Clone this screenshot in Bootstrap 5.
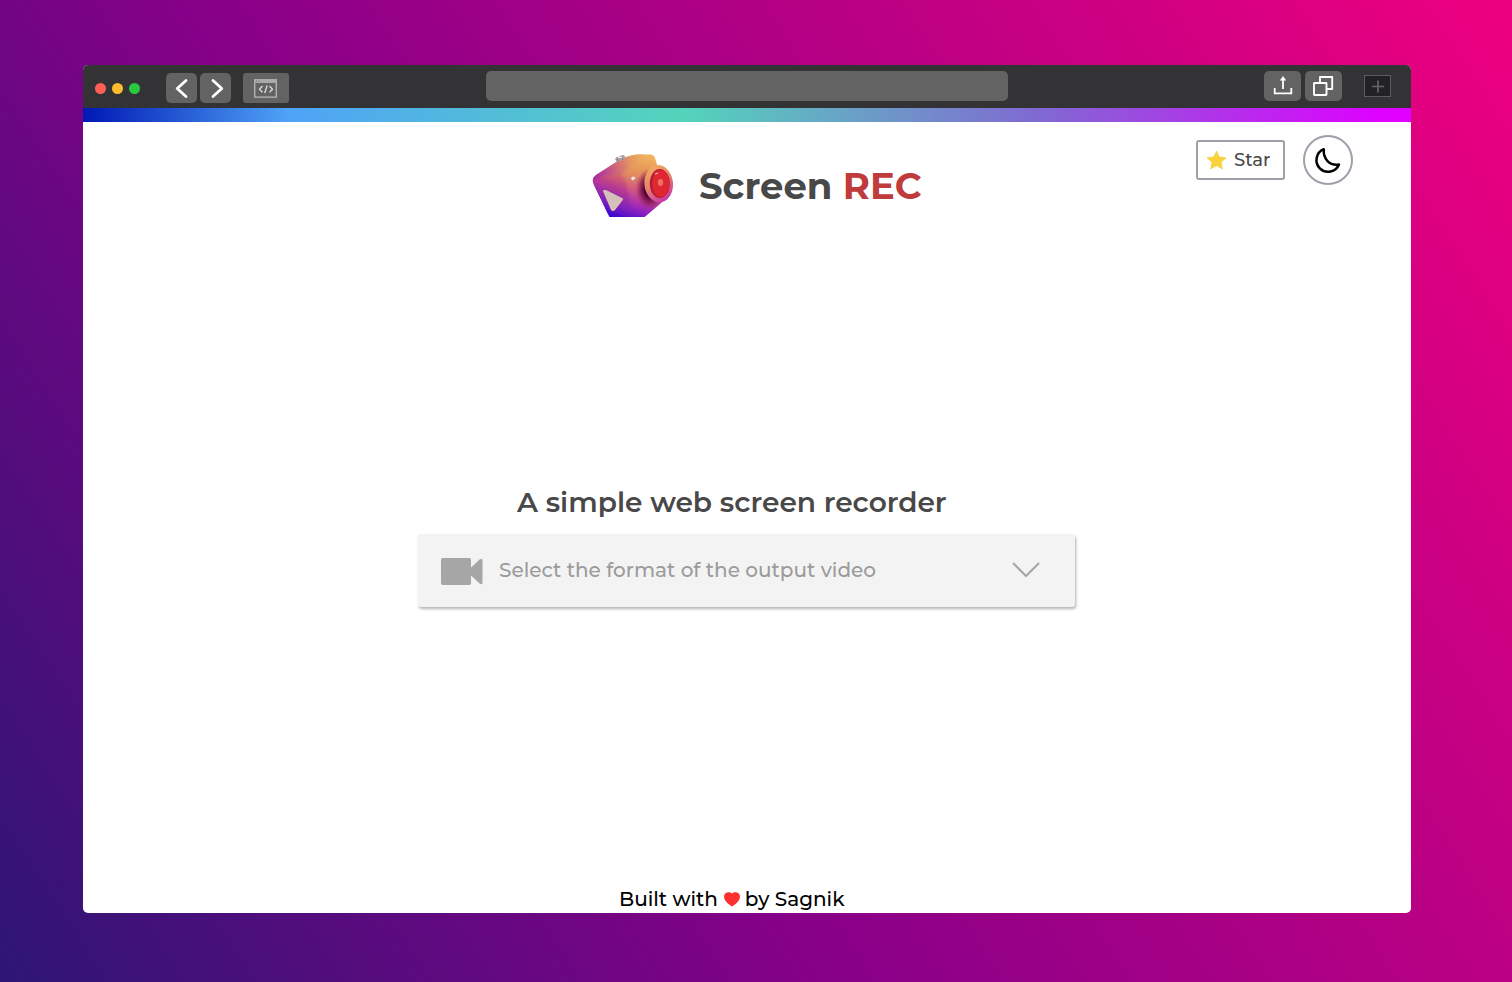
<!DOCTYPE html>
<html lang="en">
<head>
<meta charset="utf-8">
<meta name="viewport" content="width=device-width, initial-scale=1">
<title>Screen REC</title>
<link href="https://cdn.jsdelivr.net/npm/bootstrap@5.3.0/dist/css/bootstrap.min.css" rel="stylesheet">
<style>
body{height:982px;padding:65px 101px 69px 83px;overflow:hidden;font-family:Montserrat,Inter,sans-serif;background:linear-gradient(57deg,#2d1674 0%,#850088 38%,#f1007f 102%)}
svg{display:block;flex:none}
.window{height:848px;border-radius:5px;background:#fff}
.titlebar{height:43px;background:#333335;padding:0 20px 0 12px}
.dot{width:11px;height:11px;border-radius:50%}
.tool{background:#636363;border-radius:5px;height:30px;border:0;padding:0;display:flex;align-items:center;justify-content:center}
.nav-tool{width:31px}.code-tool{width:46px;border-radius:3px}.side-tool{width:37px}
.address{width:522px;height:30px;border-radius:5px;background:#636363;margin-bottom:2px}
.plus{width:27px;height:22px;border:1px solid #5c5c5e;background:#222224;margin-left:22px}
.rainbow{height:14px;background:linear-gradient(90deg,#0018b4 0%,#4fa3f7 15.5%,#54d4bb 45%,#8069d2 72%,#df00ff 98%)}
.brand-row{height:110px;padding-left:506px}
.brand{font-size:37px;font-weight:700;color:#484848;line-height:44px;margin:42px 0 0 22px;white-space:nowrap}
.rec{color:#c03b3b}
.actions{top:13px;right:58px}
.star-btn{width:89px;height:40px;border:2px solid #a19eaa;border-radius:3px;background:#fff;padding:0 0 0 8px;font-size:18px;font-weight:500;color:#484848}
.theme-btn{width:50px;height:50px;border:2px solid #a19eaa;border-radius:50%;background:#fff}
.picker{width:657px;margin:250px 0 0 335px}
.tagline{font-size:28px;font-weight:600;line-height:40px;color:#484848;margin:0 0 12px 99px;white-space:nowrap}
.format{height:73px;background:#f3f3f3;border-radius:3px;box-shadow:1px 2px 3px rgba(0,0,0,.3);padding:0 35px 0 23px;color:#9b9b9b;font-size:20px;font-weight:500;white-space:nowrap}
.credit{font-size:20px;font-weight:500;line-height:28px;color:#000;padding-left:536px;white-space:nowrap}
</style>
</head>
<body>
<div class="window d-flex flex-column overflow-hidden">
  <header class="titlebar d-flex align-items-center flex-shrink-0">
    <div class="d-flex" style="gap:6px;margin:4px 26px 0 0">
      <span class="dot" style="background:#ff5f57"></span><span class="dot" style="background:#ffbd2e"></span><span class="dot" style="background:#28c840"></span>
    </div>
    <div class="d-flex" style="gap:3px;margin-top:3px">
      <button class="tool nav-tool" aria-label="Back"><svg width="31" height="30" fill="none" stroke="#fff" stroke-width="2.8" stroke-linecap="round" stroke-linejoin="round"><path d="M20 7.500 11.200 15.500 20 23.500"/></svg></button>
      <button class="tool nav-tool" aria-label="Forward"><svg width="31" height="30" fill="none" stroke="#fff" stroke-width="2.8" stroke-linecap="round" stroke-linejoin="round"><path d="M13 7.500 21.800 15.500 13 23.500"/></svg></button>
      <button class="tool code-tool" aria-label="Code" style="margin-left:9px"><svg width="46" height="30" fill="none" stroke="#b9b9b9"><path d="M11.700 7v17.200h21.600V7" stroke-width="1.3"/><path d="M11 6h23v4H11z" fill="#aaa" stroke="none"/><path d="M13 8h1m1.500 0h1" stroke="#666"/><path d="m19.500 13-3 3.200 3 3.200M26.500 13l3 3.200-3 3.200M24.200 12.500l-2.500 7.500" stroke="#dedede" stroke-width="1.3"/></svg></button>
    </div>
    <div class="address" style="margin-left:197px"></div>
    <div class="d-flex align-items-center ms-auto" style="margin-bottom:2px">
      <button class="tool side-tool" aria-label="Share"><svg width="37" height="30" fill="none" stroke="#fff" stroke-width="1.8"><path d="M10.700 17v5.300h16.600V17M19 18V7"/><path d="M15.800 9.500 19 5l3.200 4.500z" fill="#fff" stroke="none"/></svg></button>
      <button class="tool side-tool ms-1" aria-label="Tabs"><svg width="37" height="30" fill="none" stroke="#fff" stroke-width="1.900" stroke-linejoin="round"><rect x="9" y="12" width="12.500" height="12" rx=".5"/><path d="M15 11.500V6h12.200v12H22"/></svg></button>
      <span class="plus"><svg width="25" height="20" stroke="#666" stroke-width="1.700"><path d="M7 10.500h12M13 4.500v12"/></svg></span>
    </div>
  </header>
  <div class="rainbow flex-shrink-0"></div>
  <main class="position-relative flex-grow-1 d-flex flex-column">
    <div class="brand-row d-flex align-items-start">
      <svg width="88" height="64" viewBox="0 0 88 64" style="margin-top:31px">
        <defs>
          <linearGradient id="front" gradientUnits="userSpaceOnUse" x1="58" y1="4" x2="44" y2="66"><stop offset="0" stop-color="#f0b05c"/><stop offset=".32" stop-color="#e28c5c"/><stop offset=".55" stop-color="#cf5784"/><stop offset=".78" stop-color="#a62bb5"/><stop offset="1" stop-color="#5a10cc"/></linearGradient>
          <linearGradient id="side" gradientUnits="userSpaceOnUse" x1="33" y1="20" x2="16" y2="64"><stop offset="0" stop-color="#d9735f"/><stop offset=".32" stop-color="#bb3b90"/><stop offset=".7" stop-color="#7b1fbf"/><stop offset="1" stop-color="#2100d0"/></linearGradient>
          <linearGradient id="top" gradientUnits="userSpaceOnUse" x1="6" y1="24" x2="58" y2="4"><stop offset="0" stop-color="#a52ba5"/><stop offset=".4" stop-color="#cf647a"/><stop offset=".7" stop-color="#e39763"/><stop offset="1" stop-color="#efb560"/></linearGradient>
          <linearGradient id="ring" x1=".2" y1="0" x2=".6" y2="1"><stop offset="0" stop-color="#f3b15b"/><stop offset=".5" stop-color="#e8806f"/><stop offset="1" stop-color="#c936a8"/></linearGradient>
          <radialGradient id="shade"><stop offset=".35" stop-color="#48002e"/><stop offset=".65" stop-color="#811349" stop-opacity=".7"/><stop offset="1" stop-color="#a52e66" stop-opacity="0"/></radialGradient>
          <clipPath id="cut"><path d="M4 29Q3 25 7 22L28 8.500Q36 3 48 1.500H61Q65 1.500 66 5L78 44 71 51 58 62 55 64.500H21L19 61 5 32Z"/></clipPath>
          <filter id="soft"><feGaussianBlur stdDeviation="1.200"/></filter>
        </defs>
        <g clip-path="url(#cut)"><path d="M0 0h88v64H0z" fill="url(#front)"/>
          <g filter="url(#soft)"><path d="M-4 20H30Q35 22 37 30L45 67H-4Z" fill="url(#side)"/><path d="M-3 29V10L38-5H62L54 4Q41 12 34 21Q30 21 20 22Q10 23 2 29Z" fill="url(#top)"/></g>
          <ellipse cx="61" cy="36" rx="15" ry="21" fill="url(#shade)"/></g>
        <path d="M26 6Q27 3 31 3.500L33 2Q36 1.500 36 4V6L28 9Z" fill="#aaa3a6"/><path d="m28 5.500 1 3m4-4 1 2.500" stroke="#756d72" stroke-width=".8"/><path d="M29 4.500h4" stroke="#eee"/>
        <circle cx="44.300" cy="25.500" r="2" fill="#f0e5e7"/><path d="m44.500 27.500 1.500-1" stroke="#83727a"/>
        <path d="M14 38Q14 36.500 17 37L33 45Q35 46 33 48L26 57Q24 59 22 57Z" fill="#d6c0ba"/>
        <ellipse cx="69.700" cy="30.700" rx="14.300" ry="18.700" fill="url(#ring)" transform="rotate(-5 69.700 30.700)"/>
        <ellipse cx="70.800" cy="30.500" rx="10" ry="14.600" fill="#ad1e38"/><ellipse cx="71.700" cy="30.500" rx="8.700" ry="13.400" fill="#df2631"/><ellipse cx="71.500" cy="29.500" rx="2.700" ry="3.400" fill="#ee7065"/><path d="m66 21 3-1" stroke="#ffb0a0" stroke-width="1.200"/>
      </svg>
      <h1 class="brand">Screen <span class="rec">REC</span></h1>
    </div>
    <div class="actions position-absolute d-flex align-items-center">
      <button class="star-btn d-flex align-items-center"><svg width="21" height="20" viewBox="0 0 21 20"><path d="m10.500 1 2.800 6.100 6.700.7-5 4.500 1.400 6.600-5.900-3.300-5.800 3.300 1.300-6.600L1 7.800l6.700-.7z" fill="#fbd43b" stroke="#f2cb3b" stroke-width=".7" stroke-linejoin="round"/></svg><span style="margin-left:7px">Star</span></button>
      <button class="theme-btn p-0" style="margin-left:18px" aria-label="Dark mode"><svg width="46" height="46" fill="none" stroke="#000" stroke-width="2.500" stroke-linejoin="round"><path d="M18.800 12.200A11.700 11.700 0 1 0 34 27.500C24.500 29 18 22 18.800 12.200Z"/></svg></button>
    </div>
    <section class="picker">
      <h2 class="tagline">A simple web screen recorder</h2>
      <div class="format d-flex align-items-center" role="button">
        <svg width="42" height="28" fill="#a6a6a6" style="margin-top:2px"><rect width="30" height="27" rx="2"/><path d="m30 9.500 8.500-8q3-2 3 1v22q0 3-3 1l-8.500-8z"/></svg>
        <span style="margin:-2px 0 0 16px">Select the format of the output video</span>
        <svg class="ms-auto" width="28" height="18" fill="none" stroke="#a6a6a6" stroke-width="2" style="margin-top:-1px"><path d="m1 2 13 13L27 2"/></svg>
      </div>
    </section>
    <footer class="credit mt-auto d-flex align-items-center"><span>Built with</span><svg width="16" height="15" viewBox="0 0 16 15" fill="#ff3030" style="margin:0 5px 0 6px"><path d="M8 14.500C5 12.500 0 9 0 4.500 0 0 5.500-1 8 1.500c2.500-2.500 8-1.500 8 3 0 4.500-5 8-8 10Z"/></svg><span>by Sagnik</span></footer>
  </main>
</div>
<script src="https://cdn.jsdelivr.net/npm/bootstrap@5.3.0/dist/js/bootstrap.bundle.min.js"></script>
</body>
</html>
